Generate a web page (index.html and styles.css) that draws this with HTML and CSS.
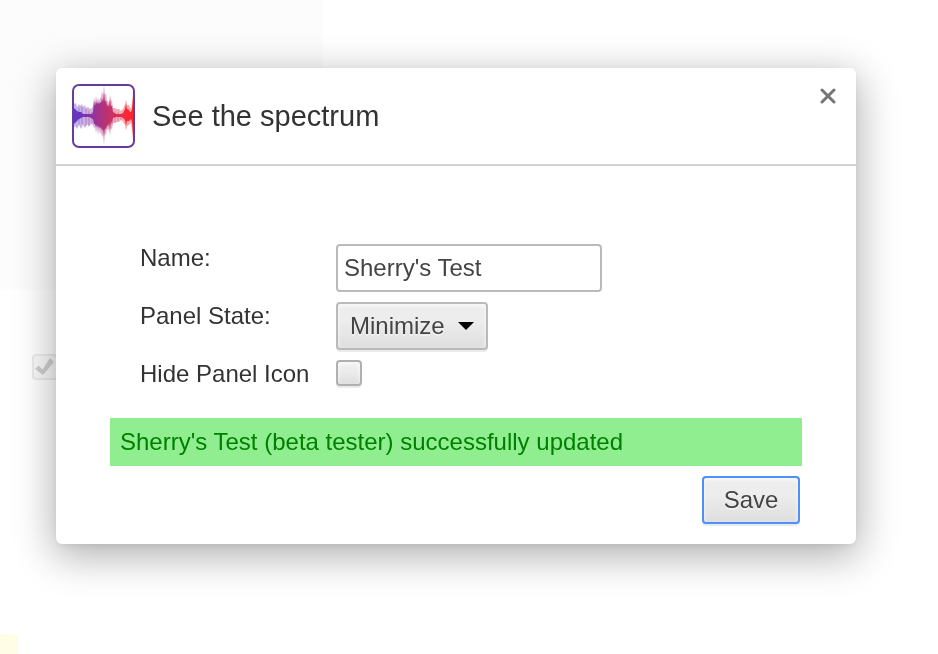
FILE: index.html
```html
<!DOCTYPE html>
<html lang="en">
<head>
<meta charset="utf-8">
<meta name="viewport" content="width=device-width, initial-scale=1">
<title>See the spectrum</title>
<link rel="stylesheet" href="styles.css">
</head>
<body>
<div class="backdrop" aria-hidden="true">
  <div class="backdrop-panel"></div>
  <svg class="backdrop-check" viewBox="0 0 26 26"><rect x="1" y="1" width="24" height="24" rx="3" fill="#fafafa" stroke="#ececec" stroke-width="2"/><path d="M3 15l3.500-3.500 4 4L18 4l4 4L11 21z" fill="#d0d0d0"/></svg>
  <div class="backdrop-note"></div>
</div>
<main class="dialog" role="dialog" aria-labelledby="title">
  <header class="dialog-header">
    <svg class="logo" viewBox="0 0 63 64" aria-hidden="true">
      <defs>
        <linearGradient id="wave" gradientUnits="userSpaceOnUse" x1="0" y1="0" x2="63" y2="0">
          <stop offset="0" stop-color="#4a20c8"/><stop offset=".3" stop-color="#7f1f9c"/><stop offset=".55" stop-color="#b51b62"/><stop offset=".8" stop-color="#e81a34"/><stop offset=".9" stop-color="#ff0c14"/><stop offset="1" stop-color="#ff0c14"/>
        </linearGradient>
      </defs>
      <rect x="1" y="1" width="61" height="62" rx="6" fill="#fff"/>
      <g fill="url(#wave)">
        <path opacity=".35" d="M1 18L3 20 4 19 5 23 7 20 8 22 10 20 11 23 13 21 14 24 16 23 18 25 20 24 21 22 22 13 23 19 24 12 25 17 26 14 27 17 28 15 29 13 30 7 31 11 32 1 33 11 34 9 35 17 36 17 37 19 38 11 39 16 40 17 41 24 43 24 45 25 47 25 49 27 51 25 53 20 54 15 55 21 57 21 58 24 59 24 60 19 61 8 62 17V45L61 57 60 46 59 39 57 41 55 42 54 47 53 41 51 38 49 36 47 38 45 38 43 39 41 39 40 46 39 44 38 51 37 45 36 47 35 44 34 52 33 49 32 61 31 51 30 53 29 48 28 50 27 45 26 51 25 44 24 49 23 43 22 44 21 41 19 40 17 43 15 40 13 44 11 41 9 45 7 41 5 45 3 42 1 45z"/>
        <path opacity=".85" d="M1 22L2 24 3 25 5 27 7 28 9 28 11 30 14 30 17 30 20 30 21 28 22 17 23 22 24 17 25 20 26 18 27 20 28 18 29 19 30 14 31 18 32 9 33 18 34 16 35 22 36 20 37 23 38 15 39 23 40 21 41 28 44 30 47 30 49 30 51 29 53 25 54 20 55 25 57 26 58 28 59 28 60 25 61 14 62 23V39L61 51 60 38 59 35 57 37 55 37 54 42 53 36 51 34 49 33 47 33 44 33 41 34 40 41 39 37 38 46 37 39 36 43 35 41 34 46 33 44 32 52 31 45 30 47 29 43 28 45 27 42 26 44 25 41 24 43 23 40 22 40 21 35 17 33 14 33 11 33 9 34 7 35 5 37 3 39 2 40 1 43z"/>
      </g>
      <path d="M7 24v16m3-17v17m4-15v17m3-15v14m3-13v11m23-12v11m3-10v9m3-7v6" fill="none" stroke="url(#wave)" opacity=".35"/>
      <rect x="1" y="1" width="61" height="62" rx="6" fill="none" stroke="#693b9b" stroke-width="2"/>
    </svg>
    <h1 class="title" id="title">See the spectrum</h1>
    <button class="close" type="button" aria-label="Close"><svg viewBox="0 0 16 16" aria-hidden="true"><path d="M2 2l12 12M14 2L2 14" fill="none" stroke="#757575" stroke-width="3" stroke-linecap="round"/></svg></button>
  </header>
  <form class="form">
    <div class="fields">
      <label for="name">Name:</label>
      <input class="text" id="name" type="text" value="Sherry's Test">
      <label for="state">Panel State:</label>
      <select class="select control" id="state"><option>Minimize</option></select>
      <label for="hide">Hide Panel Icon</label>
      <input class="check control" id="hide" type="checkbox">
    </div>
    <p class="status" role="status">Sherry's Test (beta tester) successfully updated</p>
    <button class="save control" type="button">Save</button>
  </form>
</main>
</body>
</html>
```
FILE: styles.css
```css
* {
  box-sizing: border-box;
}

body {
  margin: 0;
  min-height: 100vh;
  padding: 68px 82px 68px 56px;
  background: #fff;
  color: #333;
  font: 24px/28px "Liberation Sans", Arial, sans-serif;
}

/* Faded page behind the dialog */
.backdrop {
  position: fixed;
  inset: 0;
  overflow: hidden;
}

.backdrop-panel {
  width: 322px;
  height: 290px;
  background: #fcfcfc;
}

.backdrop-check {
  position: absolute;
  top: 354px;
  left: 32px;
  width: 26px;
  height: 26px;
}

.backdrop-note {
  position: absolute;
  top: 634px;
  left: 0;
  width: 18px;
  height: 40px;
  border-radius: 0 6px 0 0;
  background: #fffde6;
}

.dialog {
  position: relative;
  border-radius: 6px;
  background: #fff;
  box-shadow: 0 10px 40px 2px rgba(0, 0, 0, .32), 0 2px 6px rgba(0, 0, 0, .06);
}

.dialog-header {
  display: flex;
  align-items: center;
  gap: 17px;
  padding: 16px;
  border-bottom: 2px solid #d0d0d0;
}

.logo {
  flex: none;
  width: 63px;
  height: 64px;
}

.title {
  flex: 1;
  margin: 0;
  font-size: 29px;
  font-weight: 400;
  line-height: 32px;
}

.close {
  align-self: flex-start;
  display: flex;
  padding: 4px;
  border: 0;
  background: none;
}

.close svg {
  width: 16px;
  height: 16px;
}

.form {
  display: flex;
  flex-direction: column;
  padding: 78px 54px 20px;
}

.fields {
  display: grid;
  grid-template-columns: 186px 1fr;
  gap: 10px;
  justify-items: start;
  align-items: start;
  padding-left: 30px;
}

.text,
.select,
.save {
  height: 48px;
  border: 2px solid #bababa;
  border-radius: 4px;
  color: #444;
  font: inherit;
}

.text {
  width: 266px;
  padding: 0 6px;
  background: #fff;
  outline: 0;
}

.control {
  appearance: none;
  margin: 0;
  background-image: linear-gradient(#ededed, #ededed 38%, #dedede);
  box-shadow: 0 2px 0 rgba(0, 0, 0, .08), inset 0 2px 4px rgba(255, 255, 255, .75);
}

.select {
  width: 152px;
  padding: 0 12px;
  background-image: url("data:image/svg+xml,%3Csvg xmlns='http://www.w3.org/2000/svg' viewBox='0 0 16 8'%3E%3Cpath d='M0 0h16L8 8z'/%3E%3C/svg%3E"), linear-gradient(#ededed, #ededed 38%, #dedede);
  background-position: right 12px center, 0 0;
  background-repeat: no-repeat;
  background-size: 16px 8px, 100% 100%;
  text-shadow: 0 2px 0 #f0f0f0;
}

.check {
  width: 26px;
  height: 26px;
  border: 2px solid #b0b0b0;
  border-radius: 4px;
}

.status {
  margin: 30px 0 10px;
  padding: 10px;
  background: #90ee90;
  color: #008000;
}

.save {
  align-self: flex-end;
  width: 98px;
  margin-right: 2px;
  padding: 0;
  border-color: #4d90fe;
  text-shadow: 0 2px 0 #f0f0f0;
}
```
